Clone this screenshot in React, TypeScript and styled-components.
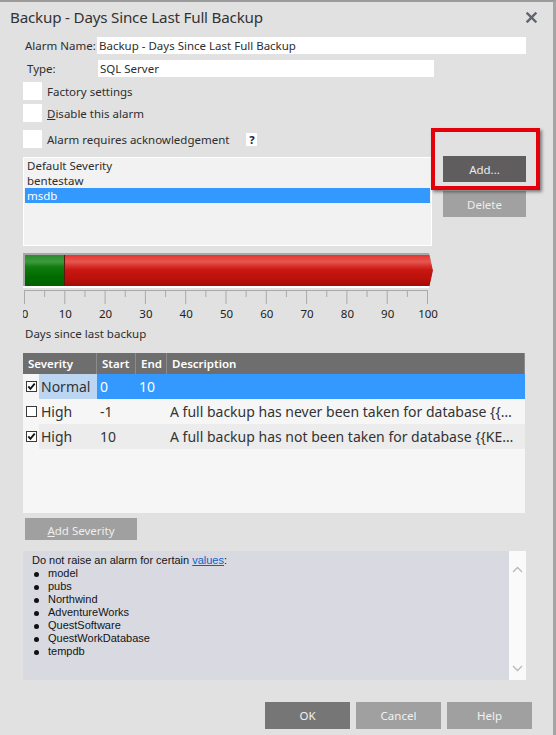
import React from 'react';
import styled, { createGlobalStyle } from 'styled-components';

const GlobalStyle = createGlobalStyle`
  html, body {
    margin: 0;
    padding: 0;
    background: #e1e1e1;
  }
  * {
    box-sizing: border-box;
  }
`;

const Dialog = styled.div`
  width: 556px;
  height: 735px;
  background: #e1e1e1;
  border-top: 2px solid #9b9b9b;
  border-right: 3px solid #a5a5a5;
  font-family: "Noto Sans", "Open Sans", sans-serif;
  color: #2e2e2e;
  display: flex;
  flex-direction: column;
  overflow: hidden;
`;

const TitleBar = styled.div`
  height: 30px;
  display: flex;
  align-items: center;
  justify-content: space-between;
  padding: 0 16px 0 10px;
`;

const Title = styled.h1`
  margin: 0;
  font-size: 15.2px;
  letter-spacing: -0.2px;
  font-weight: 400;
  color: #333;
`;

const Body = styled.div`
  padding: 0 27px 0 23px;
  display: flex;
  flex-direction: column;
`;

const FieldRow = styled.div<{ $top: number }>`
  display: flex;
  align-items: center;
  height: 17px;
  margin-top: ${p => p.$top}px;
  font-size: 11.5px;
`;

const FieldLabel = styled.span<{ $w: number; $pad: number }>`
  width: ${p => p.$w}px;
  padding-left: ${p => p.$pad}px;
  white-space: nowrap;
`;

const TextField = styled.div<{ $w?: number }>`
  height: 17px;
  line-height: 17px;
  background: #fff;
  padding-left: 2px;
  ${p => (p.$w ? `width: ${p.$w}px;` : 'flex: 1;')}
`;

const CheckRow = styled.label<{ $top: number }>`
  display: flex;
  align-items: center;
  gap: 5px;
  margin-top: ${p => p.$top}px;
  font-size: 11.5px;
`;

const BigBox = styled.span`
  width: 19px;
  height: 18px;
  background: #fff;
`;

const HelpIcon = styled.span`
  margin-left: 12px;
  width: 11px;
  height: 13px;
  background: #fff;
  color: #1b2c57;
  font-weight: 800;
  font-size: 11px;
  line-height: 13px;
  text-align: center;
`;

const ListSection = styled.div`
  display: flex;
  margin-top: 9px;
`;

const ListBox = styled.div`
  width: 410px;
  height: 89px;
  background: #f2f2f2;
  border: 1px solid #fff;
  font-size: 11.5px;
`;

const ListItem = styled.div<{ $selected?: boolean }>`
  height: 15px;
  line-height: 15px;
  padding-left: 2px;
  margin: 0 1px;
  background: ${p => (p.$selected ? '#3399ff' : 'transparent')};
  color: ${p => (p.$selected ? '#fff' : '#2e2e2e')};
`;

const ButtonCol = styled.div`
  position: relative;
  margin: -1px 0 0 11px;
  display: flex;
  flex-direction: column;
  gap: 9px;
`;

const SideButton = styled.button<{ $dark?: boolean }>`
  width: 83px;
  height: 26px;
  border: none;
  padding: 0;
  background: ${p => (p.$dark ? '#5f5d5e' : '#a1a1a1')};
  color: #ececec;
  font-family: inherit;
  font-size: 11.5px;
`;

const Highlight = styled.div`
  position: absolute;
  left: -12px;
  top: -28px;
  width: 109px;
  height: 62px;
  border: 4px solid #e3000b;
  box-shadow: 2px 2px 3px rgba(0, 0, 0, 0.45);
  pointer-events: none;
`;

const Track = styled.div`
  margin-top: 7px;
  width: 410px;
  height: 35px;
  background: #a8a8a8;
  padding: 2px 0 0 2px;
  border-bottom: 2px solid #fff;
  display: flex;
  clip-path: polygon(0 0, 406px 0, 410px 50%, 406px 100%, 0 100%);
`;

const GreenPart = styled.div`
  width: 40px;
  background: linear-gradient(#2c8b2c 0%, #3d9b3d 22%, #117d11 38%, #006c00 70%, #006200 100%);
  border-right: 1px solid #5a1a10;
`;

const RedPart = styled.div`
  flex: 1;
  clip-path: polygon(0 0, calc(100% - 3px) 0, 100% 50%, calc(100% - 3px) 100%, 0 100%);
  background: linear-gradient(#e8332d 0%, #e45852 22%, #dc3a33 32%, #c81711 48%, #ba100b 78%, #a20b07 100%);
`;

const Caption = styled.div`
  margin-top: 2px;
  font-size: 11.5px;
  line-height: 16px;
  padding-left: 2px;
`;

const Table = styled.div`
  margin-top: 11px;
  width: 502px;
  height: 160px;
  background: #f6f6f6;
`;

const Grid = styled.div`
  display: grid;
  grid-template-columns: 74px 39px 31px 1fr;
`;

const HeaderRow = styled(Grid)`
  height: 21px;
  background: #6e6e6e;
  color: #fff;
  font-size: 11.5px;
  font-weight: 600;
`;

const HeaderCell = styled.div`
  line-height: 21px;
  padding-left: 5px;
  border-right: 1px solid #8c8c8c;
`;

const Row = styled(Grid)<{ $bg: string; $selected?: boolean }>`
  height: 25px;
  line-height: 25px;
  font-size: 14px;
  background: ${p => p.$bg};
  color: ${p => (p.$selected ? '#fff' : '#333')};
`;

const SeverityCell = styled.div`
  display: flex;
  background: #f6f6f6;
`;

const BoxSlot = styled.span`
  width: 16px;
  display: flex;
  align-items: center;
  justify-content: center;
`;

const SeverityName = styled.span<{ $selected?: boolean; $bg: string }>`
  flex: 1;
  padding-left: 2px;
  background: ${p => (p.$selected ? '#bcd6f2' : p.$bg)};
  color: #333;
`;

const Cell = styled.div`
  padding-left: 3px;
  white-space: nowrap;
`;

const AddSeverity = styled.button`
  margin: 5px 0 0 2px;
  width: 112px;
  height: 22px;
  border: none;
  padding: 3px 0 0;
  background: #a0a0a0;
  color: #eeeeee;
  font-family: inherit;
  font-size: 11.5px;
`;

const InfoBox = styled.div`
  margin-top: 11px;
  width: 503px;
  height: 129px;
  background: #d8d9e1;
  display: flex;
`;

const InfoText = styled.div`
  flex: 1;
  padding: 3px 0 0 9px;
  font-family: "Liberation Sans", Arial, sans-serif;
  font-size: 11px;
  line-height: 13px;
  color: #141414;
`;

const Link = styled.a`
  color: #0b62c8;
  text-decoration: underline;
`;

const Bullets = styled.ul`
  margin: 0;
  padding: 0;
  list-style: none;
`;

const Bullet = styled.li`
  position: relative;
  padding-left: 16px;
  &::before {
    content: '';
    position: absolute;
    left: 2px;
    top: 5px;
    width: 5px;
    height: 5px;
    border-radius: 50%;
    background: #111;
  }
`;

const ScrollBar = styled.div`
  width: 17px;
  background: #fafafa;
  display: flex;
  flex-direction: column;
  justify-content: space-between;
  align-items: center;
  padding: 15px 0 8px;
`;

const Footer = styled.div`
  margin-top: 22px;
  padding-right: 21px;
  display: flex;
  justify-content: flex-end;
  gap: 6px;
`;

const FooterButton = styled.button<{ $primary?: boolean }>`
  width: 85px;
  height: 27px;
  border: none;
  padding: 0;
  background: ${p => (p.$primary ? '#767676' : '#a0a0a0')};
  color: #f2f2f2;
  font-family: inherit;
  font-size: 11.5px;
`;

const CloseIcon = () => (
  <svg width="11" height="11" viewBox="0 0 11 11">
    <path d="M1.5 1.5 L9.5 9.5 M9.5 1.5 L1.5 9.5" stroke="#5f6470" strokeWidth="2.4" strokeLinecap="square" />
  </svg>
);

const SmallCheck = ({ checked }: { checked: boolean }) => (
  <svg width="11" height="11" viewBox="0 0 11 11">
    <rect x="0.5" y="0.5" width="10" height="10" fill="#fff" stroke="#3a3a3a" />
    {checked && <path d="M2.3 5.4 L4.4 7.8 L8.7 2.6" fill="none" stroke="#111" strokeWidth="1.8" />}
  </svg>
);

const Chevron = ({ up }: { up?: boolean }) => (
  <svg width="11" height="7" viewBox="0 0 11 7">
    <path d={up ? 'M1 6 L5.5 1.5 L10 6' : 'M1 1 L5.5 5.5 L10 1'} fill="none" stroke="#b9b9b9" strokeWidth="1.3" />
  </svg>
);

const Ruler = () => {
  const step = 40.3;
  const marks = Array.from({ length: 21 }, (_, i) => i);
  return (
    <svg width="425" height="36" viewBox="0 0 425 36">
      <line x1="1" y1="2.5" x2="405" y2="2.5" stroke="#a9a9a9" strokeWidth="1" />
      {marks.map(i => {
        const x = 1.5 + (i * step) / 2;
        const major = i % 2 === 0;
        return (
          <line key={i} x1={x} y1="2" x2={x} y2={major ? 16 : 9} stroke="#a9a9a9" strokeWidth="1" />
        );
      })}
      {marks.filter(i => i % 2 === 0).map(i => (
        <text
          key={i}
          x={2 + (i * step) / 2}
          y="30"
          textAnchor="middle"
          fontSize="11.5"
          fontFamily="Noto Sans, sans-serif"
          fill="#222"
        >
          {i * 5}
        </text>
      ))}
    </svg>
  );
};

// descriptions are shown as the grid truncates them in the dialog
const severities = [
  { checked: true, name: 'Normal', start: '0', end: '10', desc: '', bg: '#3399ff', selected: true },
  { checked: false, name: 'High', start: '-1', end: '', desc: 'A full backup has never been taken for database {{…', bg: '#f6f6f6' },
  { checked: true, name: 'High', start: '10', end: '', desc: 'A full backup has not been taken for database {{KE…', bg: '#ececec' },
];

const excluded = ['model', 'pubs', 'Northwind', 'AdventureWorks', 'QuestSoftware', 'QuestWorkDatabase', 'tempdb'];

export default function App() {
  return (
    <>
      <GlobalStyle />
      <Dialog>
        <TitleBar>
          <Title>Backup - Days Since Last Full Backup</Title>
          <CloseIcon />
        </TitleBar>
        <Body>
          <FieldRow $top={5}>
            <FieldLabel $w={74} $pad={2}>Alarm Name:</FieldLabel>
            <TextField>Backup - Days Since Last Full Backup</TextField>
          </FieldRow>
          <FieldRow $top={6}>
            <FieldLabel $w={75} $pad={4}>Type:</FieldLabel>
            <TextField $w={336}>SQL Server</TextField>
          </FieldRow>
          <CheckRow $top={5}>
            <BigBox />
            Factory settings
          </CheckRow>
          <CheckRow $top={4}>
            <BigBox />
            <span><u>D</u>isable this alarm</span>
          </CheckRow>
          <CheckRow $top={8}>
            <BigBox />
            Alarm requires acknowledgement
            <HelpIcon>?</HelpIcon>
          </CheckRow>
          <ListSection>
            <ListBox>
              <ListItem>Default Severity</ListItem>
              <ListItem>bentestaw</ListItem>
              <ListItem $selected>msdb</ListItem>
            </ListBox>
            <ButtonCol>
              <SideButton $dark>Add...</SideButton>
              <SideButton>Delete</SideButton>
              <Highlight />
            </ButtonCol>
          </ListSection>
          <Track>
            <GreenPart />
            <RedPart />
          </Track>
          <Ruler />
          <Caption>Days since last backup</Caption>
          <Table>
            <HeaderRow>
              <HeaderCell>Severity</HeaderCell>
              <HeaderCell>Start</HeaderCell>
              <HeaderCell>End</HeaderCell>
              <HeaderCell>Description</HeaderCell>
            </HeaderRow>
            {severities.map((s, i) => (
              <Row key={i} $bg={s.bg} $selected={s.selected}>
                <SeverityCell>
                  <BoxSlot>
                    <SmallCheck checked={s.checked} />
                  </BoxSlot>
                  <SeverityName $selected={s.selected} $bg={s.bg}>{s.name}</SeverityName>
                </SeverityCell>
                <Cell>{s.start}</Cell>
                <Cell>{s.end}</Cell>
                <Cell>{s.desc}</Cell>
              </Row>
            ))}
          </Table>
          <AddSeverity><u>A</u>dd Severity</AddSeverity>
          <InfoBox>
            <InfoText>
              Do not raise an alarm for certain <Link>values</Link>:
              <Bullets>
                {excluded.map(name => (
                  <Bullet key={name}>{name}</Bullet>
                ))}
              </Bullets>
            </InfoText>
            <ScrollBar>
              <Chevron up />
              <Chevron />
            </ScrollBar>
          </InfoBox>
        </Body>
        <Footer>
          <FooterButton $primary>OK</FooterButton>
          <FooterButton>Cancel</FooterButton>
          <FooterButton>Help</FooterButton>
        </Footer>
      </Dialog>
    </>
  );
}
